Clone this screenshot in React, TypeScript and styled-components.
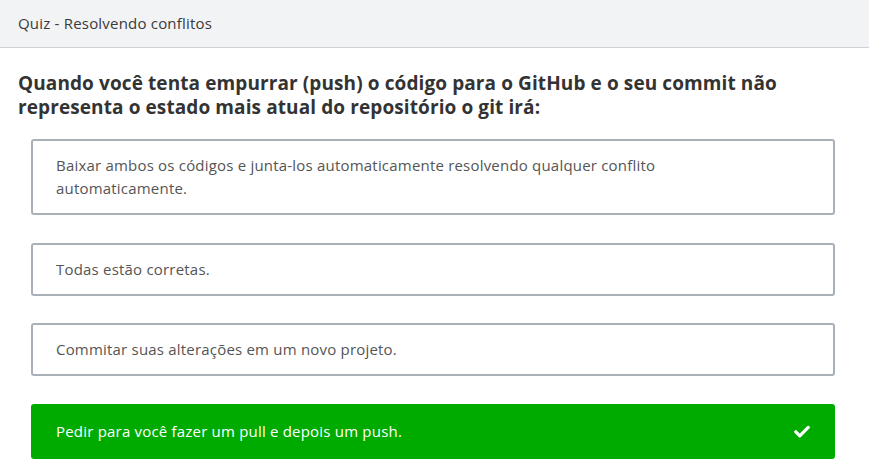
import React from "react";
import styled, { createGlobalStyle } from "styled-components";

const GlobalStyle = createGlobalStyle`
  body {
    margin: 0;
    background: #ffffff;
    font-family: "Open Sans", "Noto Sans", sans-serif;
  }
`;

const Page = styled.div`
  display: flex;
  flex-direction: column;
`;

const TopBar = styled.header`
  height: 48px;
  display: flex;
  align-items: center;
  padding: 0 18px 2px;
  box-sizing: border-box;
  background: #f2f3f5;
  border-bottom: 1px solid #cdd1d8;
  font-size: 15px;
  letter-spacing: 0.2px;
  color: #3a3a3a;
`;

const Question = styled.h2`
  margin: 23px 18px 20px;
  font-size: 19px;
  line-height: 24px;
  font-weight: 700;
  letter-spacing: 0.1px;
  color: #333333;
`;

const OptionList = styled.div`
  display: flex;
  flex-direction: column;
  gap: 27.5px;
  padding: 0 34px 0 31px;
`;

const Option = styled.div<{ $correct?: boolean }>`
  display: flex;
  align-items: center;
  justify-content: space-between;
  gap: 20px;
  min-height: ${(p) => (p.$correct ? "55px" : "53px")};
  box-sizing: border-box;
  padding: 13px 23px;
  border: 2px solid ${(p) => (p.$correct ? "#00ab00" : "#a9b0b8")};
  border-radius: 3px;
  background: ${(p) => (p.$correct ? "#00ab00" : "#ffffff")};
  color: ${(p) => (p.$correct ? "#ffffff" : "#555555")};
  font-size: 15px;
  letter-spacing: 0.2px;
  line-height: 23px;
`;

const OptionText = styled.span`
  max-width: 680px;
`;

const Check = styled.svg`
  width: 16px;
  height: 13px;
  flex-shrink: 0;
`;

const options = [
  {
    text: "Baixar ambos os códigos e junta-los automaticamente resolvendo qualquer conflito automaticamente.",
    correct: false,
  },
  { text: "Todas estão corretas.", correct: false },
  { text: "Commitar suas alterações em um novo projeto.", correct: false },
  { text: "Pedir para você fazer um pull e depois um push.", correct: true },
];

const App = () => {
  return (
    <>
      <GlobalStyle />
      <Page>
        <TopBar>Quiz - Resolvendo conflitos</TopBar>
        <Question>
          Quando você tenta empurrar (push) o código para o GitHub e o seu
          commit não representa o estado mais atual do repositório o git irá:
        </Question>
        <OptionList>
          {options.map((o) => (
            <Option key={o.text} $correct={o.correct}>
              <OptionText>{o.text}</OptionText>
              {o.correct && (
                <Check viewBox="0 0 16 13">
                  <path
                    d="M1.8 6.8 L5.8 10.8 L14.2 2.4"
                    fill="none"
                    stroke="#ffffff"
                    strokeWidth="3.2"
                    strokeLinecap="round"
                    strokeLinejoin="round"
                  />
                </Check>
              )}
            </Option>
          ))}
        </OptionList>
      </Page>
    </>
  );
};

export default App;
